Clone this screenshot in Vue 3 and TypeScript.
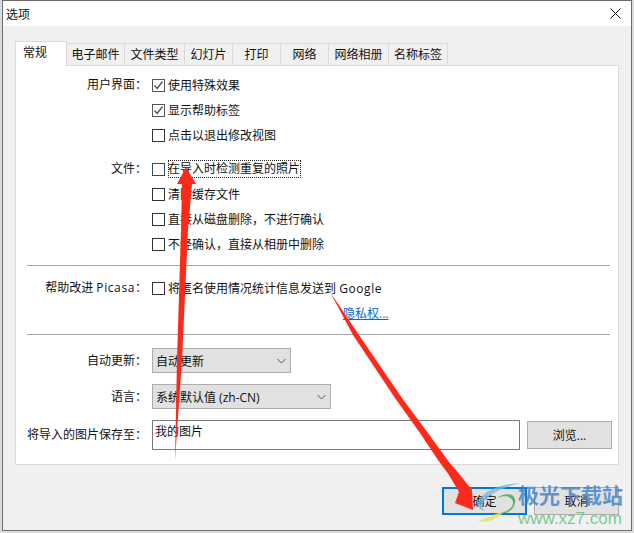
<script setup lang="ts">
const tabs = ['常规', '电子邮件', '文件类型', '幻灯片', '打印', '网络', '网络相册', '名称标签']
const tabWidths = [52, 58, 60, 48, 48, 48, 60, 59]
</script>

<template>
  <div class="screen">
    <div class="dialog">
      <div class="titlebar">
        <span>选项</span>
        <svg class="close" width="11" height="11" viewBox="0 0 11 11"><path d="M0.5 0.5L10.5 10.5M10.5 0.5L0.5 10.5" stroke="#111" stroke-width="1" fill="none" /></svg>
      </div>
      <div class="body">
        <div class="tabs">
          <div v-for="(t, i) in tabs" :key="t" class="tab" :class="{ active: i === 0 }" :style="{ width: tabWidths[i] + 'px' }">{{ t }}</div>
        </div>
        <div class="panel">
          <div class="group first">
            <div class="label">用户界面：</div>
            <div class="checks">
              <div class="check"><span class="box on"><svg width="11" height="11" viewBox="0 0 11 11"><path d="M1.5 5.5L4.2 8.5L9.5 1.5" stroke="#555" stroke-width="1.4" fill="none" /></svg></span>使用特殊效果</div>
              <div class="check"><span class="box on"><svg width="11" height="11" viewBox="0 0 11 11"><path d="M1.5 5.5L4.2 8.5L9.5 1.5" stroke="#555" stroke-width="1.4" fill="none" /></svg></span>显示帮助标签</div>
              <div class="check"><span class="box"></span>点击以退出修改视图</div>
            </div>
          </div>
          <div class="group second">
            <div class="label">文件：</div>
            <div class="checks">
              <div class="check"><span class="box focus"></span><span class="focused">在导入时检测重复的照片</span></div>
              <div class="check"><span class="box"></span>清除缓存文件</div>
              <div class="check"><span class="box"></span>直接从磁盘删除，不进行确认</div>
              <div class="check"><span class="box"></span>不经确认，直接从相册中删除</div>
            </div>
          </div>
          <hr class="sep sep1" />
          <div class="group third">
            <div class="label">帮助改进 <span class="lat">Picasa</span>：</div>
            <div class="check"><span class="box"></span>将匿名使用情况统计信息发送到&nbsp;<span class="lat">Google</span></div>
          </div>
          <div class="linkrow"><a class="link">隐私权...</a></div>
          <hr class="sep sep2" />
          <div class="group field f1">
            <div class="label">自动更新：</div>
            <div class="select s1">自动更新<svg width="9" height="6" viewBox="0 0 9 6"><path d="M0.5 1L4.5 5L8.5 1" stroke="#555" fill="none" /></svg></div>
          </div>
          <div class="group field f2">
            <div class="label">语言：</div>
            <div class="select s2">系统默认值 (zh-CN)<svg width="9" height="6" viewBox="0 0 9 6"><path d="M0.5 1L4.5 5L8.5 1" stroke="#555" fill="none" /></svg></div>
          </div>
          <div class="group field f3">
            <div class="label">将导入的图片保存至：</div>
            <div class="input">我的图片</div>
            <div class="btn browse">浏览...</div>
          </div>
        </div>
        <div class="footer">
          <div class="btn ok">确定</div>
          <div class="btn cancel">取消</div>
        </div>
      </div>
    </div>

    <svg class="overlay" width="634" height="533" viewBox="0 0 634 533">
      <polygon points="186,167 196,184 192,184 188,230 182,360 175,460 177,360 181,230 182,184 177,184" fill="#fb2a1b" />
      <polygon points="330,292 359,335 402,398 428,433 449,462 460,475 472,490 473,510 455,503 459,492 449,475 438,460 420,433 395,398 353,335" fill="#fb2a1b" />
    </svg>
    <div class="wm">
      <svg class="logo" width="43" height="40" viewBox="0 0 43 40">
        <path d="M43 0C25 1 8 7 2 17C-1 23 2 27 8 28C4 25 5 20 9 16C16 9 29 4 43 0Z" fill="#74b6de" opacity="0.75" />
        <path d="M20 15C29 11 37 14 36 21C34 28 24 31 14 31C24 33 36 30 38 20C40 10 28 9 20 15Z" fill="#46a857" opacity="0.85" />
        <path d="M1 39C8 34 17 33 27 27C24 34 13 40 1 39Z" fill="#e3e163" opacity="0.8" />
      </svg>
      <div class="wmtext">
        <div class="wm1">极光下载站</div>
        <div class="wm2">www.xz7.com</div>
      </div>
    </div>
  </div>
</template>

<style scoped>
.screen {
  position: relative;
  width: 634px;
  height: 533px;
  overflow: hidden;
  background: #dcdcdc;
  font-family: "Open Sans", "Noto Sans CJK SC", sans-serif;
  font-size: 12px;
  color: #111;
}
.dialog {
  box-sizing: border-box;
  width: 630px;
  height: 531px;
  margin-left: 2px;
  border: 1px solid #6d6d6d;
  background: #f0f0f0;
  display: flex;
  flex-direction: column;
}
.titlebar {
  height: 25px;
  background: #fff;
  display: flex;
  align-items: center;
  justify-content: space-between;
  padding: 0 10px 0 3px;
}
.body {
  flex: 1;
  padding: 15px 8px 0 12px;
  display: flex;
  flex-direction: column;
}
.tabs {
  display: flex;
  height: 24px;
  position: relative;
  z-index: 1;
}
.tab {
  box-sizing: border-box;
  height: 22px;
  margin-top: 2px;
  border: 1px solid #d9d9d9;
  border-left-width: 0;
  border-bottom: 0;
  background: #f0f0f0;
  text-align: center;
  line-height: 22px;
}
.tab.active {
  height: 25px;
  margin-top: 0;
  background: #fff;
  border-left-width: 1px;
  line-height: 21px;
  text-align: left;
  padding-left: 7px;
}
.panel {
  box-sizing: border-box;
  width: 604px;
  height: 400px;
  background: #fff;
  border: 1px solid #d9d9d9;
  padding: 0 8px 0 11px;
}
.group {
  display: flex;
  align-items: flex-start;
}
.first { padding-top: 10px; }
.second { margin-top: 16px; }
.third { margin-top: 13px; }
.label {
  flex: none;
  width: 120px;
  margin-right: 5px;
  height: 18px;
  line-height: 18px;
  text-align: right;
  white-space: nowrap;
}
.lat { letter-spacing: 0.6px; }
.checks { display: flex; flex-direction: column; }
.check {
  display: flex;
  align-items: center;
  height: 18px;
  white-space: pre;
}
.checks .check + .check { margin-top: 7px; }
.box {
  box-sizing: border-box;
  flex: none;
  width: 13px;
  height: 13px;
  border: 1px solid #333;
  background: #fff;
  display: flex;
  align-items: center;
  justify-content: center;
  margin-right: 3px;
}
.box.on { border-color: #555; }
.box.focus { border-color: #2b4a66; }
.focused {
  outline: 1px dotted #222;
  outline-offset: -1px;
  line-height: 18px;
  padding-right: 1px;
}
.sep {
  height: 0;
  margin: 0;
  border: 0;
  border-top: 1px solid #a5a5a5;
}
.sep1 { margin-top: 12px; }
.sep2 { margin-top: 11px; }
.linkrow {
  height: 18px;
  margin-top: 8px;
  padding-left: 316px;
  line-height: 18px;
}
.link {
  color: #0a66c8;
  text-decoration: underline;
}
.field { align-items: center; }
.f1 { margin-top: 13px; }
.f2 { margin-top: 11px; }
.f3 { margin-top: 11px; }
.select {
  box-sizing: border-box;
  height: 25px;
  border: 1px solid #adadad;
  background: #e1e1e1;
  padding: 0 4px 0 3px;
  display: flex;
  align-items: center;
  justify-content: space-between;
}
.s1 { width: 139px; }
.s2 { width: 179px; }
.input {
  box-sizing: border-box;
  flex: none;
  width: 368px;
  height: 30px;
  border: 1px solid #7a7a7a;
  background: #fff;
  padding: 2px 3px 2px 2px;
  line-height: 18px;
}
.btn {
  box-sizing: border-box;
  flex: none;
  border: 1px solid #adadad;
  background: #e1e1e1;
  display: flex;
  align-items: center;
  justify-content: center;
}
.browse {
  width: 85px;
  height: 28px;
  margin-left: 7px;
}
.footer {
  display: flex;
  gap: 7px;
  padding: 22px 0 0 427px;
}
.ok {
  width: 85px;
  height: 28px;
  border: 2px solid #0078d7;
}
.cancel {
  width: 85px;
  height: 28px;
}
.overlay {
  position: absolute;
  left: 0;
  top: 0;
  pointer-events: none;
}
.wm {
  position: absolute;
  left: 477px;
  top: 483px;
  width: 150px;
  display: flex;
  align-items: flex-start;
  pointer-events: none;
}
.logo { flex: none; margin-right: -2px; }
.wmtext { flex: none; }
.wm1 {
  font-size: 21px;
  line-height: 25px;
  font-weight: 700;
  white-space: nowrap;
  color: rgba(60, 125, 200, 0.8);
}
.wm2 {
  font-family: "Liberation Sans", sans-serif;
  font-size: 17px;
  line-height: 17px;
  margin-top: 2px;
  white-space: nowrap;
  color: rgba(90, 190, 120, 0.8);
}
</style>
<style>
html, body { margin: 0; }
</style>
